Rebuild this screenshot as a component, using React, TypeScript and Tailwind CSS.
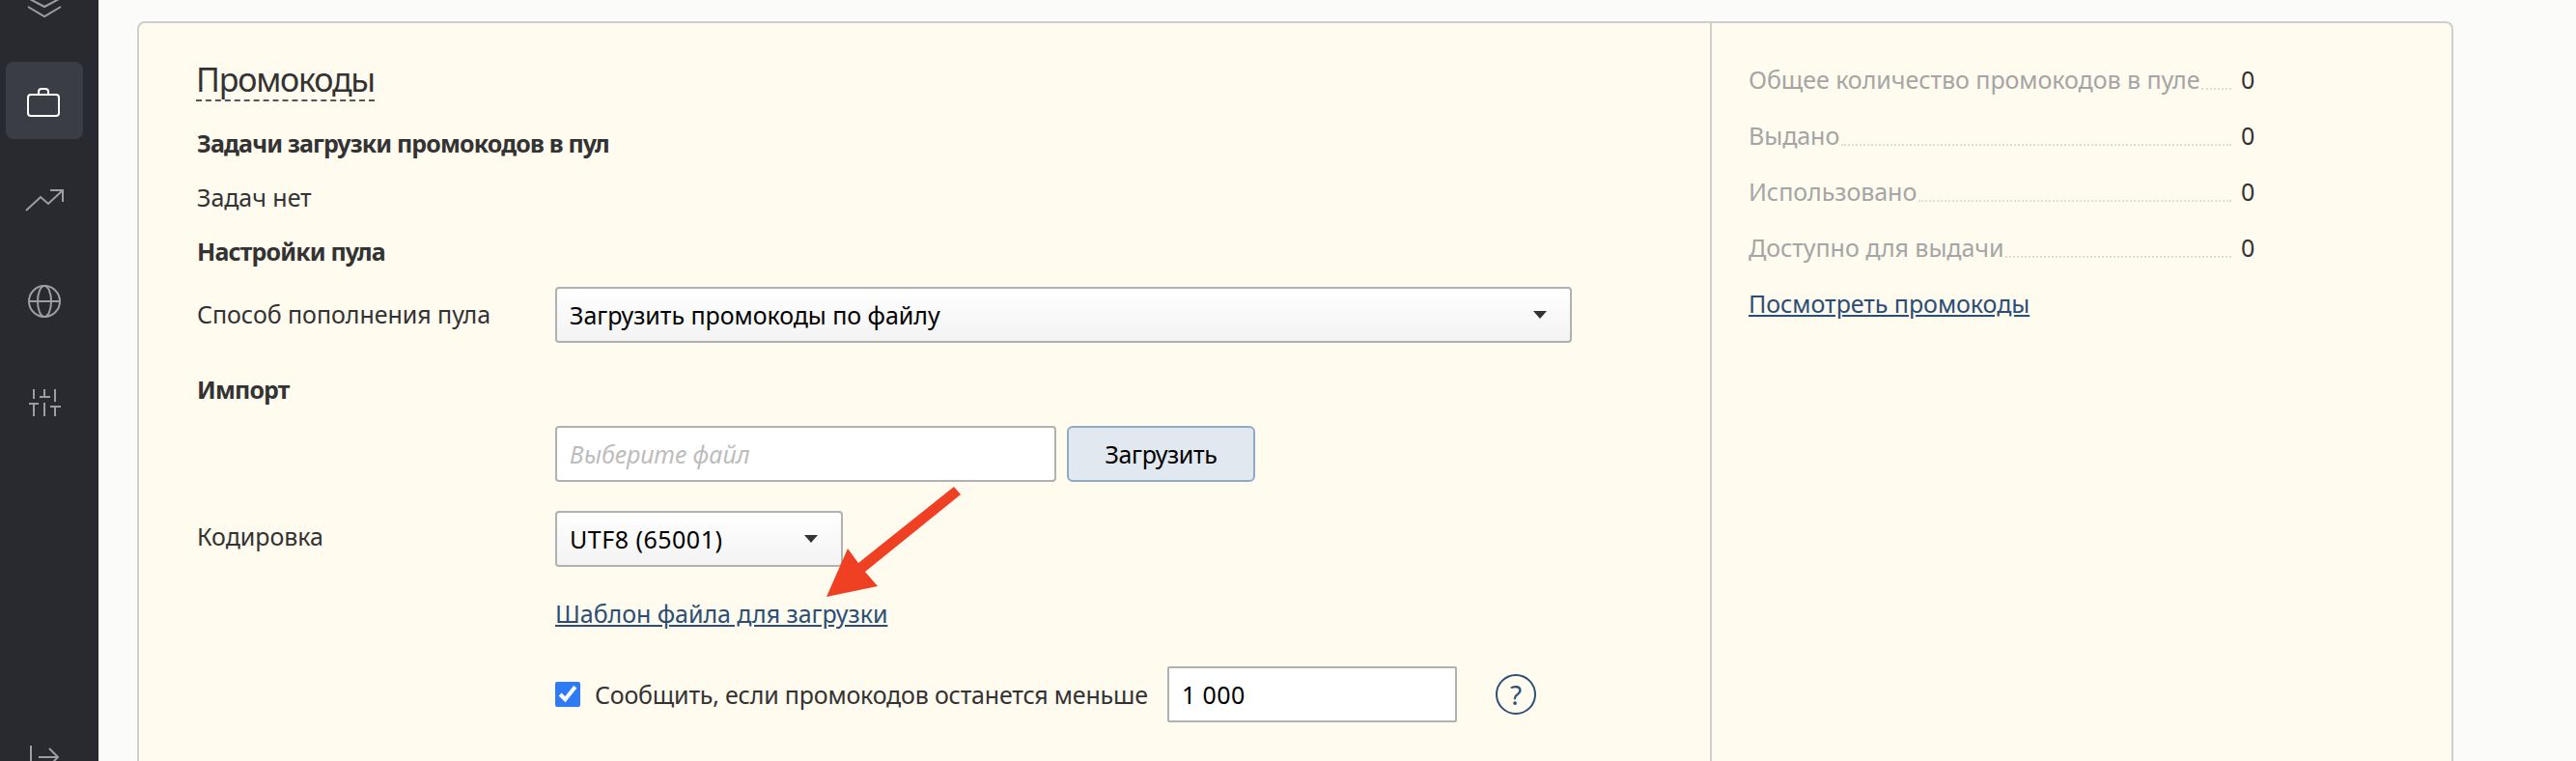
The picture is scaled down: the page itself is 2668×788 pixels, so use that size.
import React from 'react';

const font = "[font-family:'Noto_Sans',sans-serif]";

const SideIcon = ({ children, active }: { children: React.ReactNode; active?: boolean }) => (
  <div className={`flex h-[80px] w-[80px] items-center justify-center rounded-[8px] ${active ? 'bg-[#3a3d43]' : ''}`}>
    <svg width="48" height="48" viewBox="0 0 48 48" fill="none" stroke={active ? '#ffffff' : '#9d9ea2'} strokeWidth="2">
      {children}
    </svg>
  </div>
);

const Sidebar = () => (
  <aside className="flex h-full w-[102px] shrink-0 flex-col items-start gap-6 bg-[#282a2f] pl-[6px]">
    <div className="-mt-[40px]">
      <SideIcon>
        <path d="M7 31l17 10 17-10M7 22l17 9 17-9" />
      </SideIcon>
    </div>
    <SideIcon active>
      <rect x="7" y="18" width="32" height="22" rx="3" />
      <path d="M18 18v-3a3 3 0 0 1 3-3h4a3 3 0 0 1 3 3v3" />
    </SideIcon>
    <SideIcon>
      <path d="M5 34l15-14 8 7 15-14M30 13h13v12" />
    </SideIcon>
    <SideIcon>
      <circle cx="24" cy="24" r="16" />
      <ellipse cx="24" cy="24" rx="7" ry="16" />
      <path d="M8 24h32" />
    </SideIcon>
    <SideIcon>
      <path d="M13 11v10M13 26v13M8 26h10M24 11v8M19 19h11M24 25v14M35 11v13M30 29h11M35 29v10" />
    </SideIcon>
    <div className="mt-auto -mb-[16px]">
      <svg className="ml-[20px]" width="40" height="40" viewBox="0 0 40 40" fill="none" stroke="#9d9ea2" strokeWidth="2">
        <path d="M6 8v24M14 20h20M25 11l9 9-9 9" />
      </svg>
    </div>
  </aside>
);

const SelectBox = ({ value, className }: { value: string; className: string }) => (
  <div className={`flex h-[58px] items-center justify-between rounded-[4px] border-2 border-[#b1b1b1] bg-gradient-to-b from-white to-[#f3f3f3] pl-[13px] pr-[24px] text-black ${className}`}>
    <span>{value}</span>
    <span className="h-0 w-0 border-x-[7px] border-t-[8px] border-x-transparent border-t-[#333333]" />
  </div>
);

const stats = ['Общее количество промокодов в пуле', 'Выдано', 'Использовано', 'Доступно для выдачи'];

const App = () => (
  <div className={`flex h-[788px] w-[2668px] overflow-hidden bg-[#fbfcf9] text-[25px] leading-[34px] tracking-[-0.05px] text-[#333333] ${font}`}>
    <Sidebar />
    <main className="flex-1 pl-[40px] pt-[22px]">
      <div className="relative flex h-[800px] w-[2399px] rounded-[8px] border-2 border-b-0 border-[#cfcfcf] bg-[#fffbef]">
        <section className="w-[1629px] shrink-0 border-r-2 border-[#cfcfcf] pl-[60px] pt-[37px]">
          <h1 className="-ml-[1px] inline-block border-b-2 border-dashed border-[#555555] text-[34px] leading-[42px] font-normal tracking-[-1.2px]">Промокоды</h1>
          <h2 className="mt-[26px] font-bold tracking-[-0.85px]">Задачи загрузки промокодов в пул</h2>
          <p className="mt-[22px]">Задач нет</p>
          <h2 className="mt-[22px] font-bold tracking-[-0.85px]">Настройки пула</h2>
          <div className="mt-[20px] flex items-center">
            <span className="w-[371px] pb-[2px]">Способ пополнения пула</span>
            <SelectBox value="Загрузить промокоды по файлу" className="w-[1053px]" />
          </div>
          <h2 className="mt-[31px] font-bold tracking-[-0.85px]">Импорт</h2>
          <div className="ml-[371px] mt-[21px] flex gap-[11px]">
            <input
              readOnly
              placeholder="Выберите файл"
              className="h-[58px] w-[519px] rounded-[4px] border-2 border-[#b1b1b1] bg-white px-[13px] italic outline-none placeholder:text-[#bdbdbd]"
            />
            <button className="h-[58px] w-[195px] rounded-[6px] border-2 border-[#8fabc4] bg-[#e1e8ef] tracking-[-0.4px] text-black">Загрузить</button>
          </div>
          <div className="mt-[30px] flex items-center">
            <span className="w-[371px] pb-[6px]">Кодировка</span>
            <SelectBox value="UTF8 (65001)" className="w-[298px] tracking-[0.5px]" />
          </div>
          <a className="ml-[371px] mt-[31px] block w-fit text-[#2b4e77] underline underline-offset-2">Шаблон файла для загрузки</a>
          <div className="ml-[371px] mt-[38px] flex items-center">
            <input type="checkbox" checked readOnly className="h-[26px] w-[26px] accent-[#2f7bf6]" />
            <span className="ml-[15px] w-[593px] shrink-0 tracking-[-0.2px]">Сообщить, если промокодов останется меньше</span>
            <input
              readOnly
              value="1 000"
              className="h-[58px] w-[300px] rounded-[2px] border-2 border-[#b1b1b1] bg-white px-[13px] tracking-[0.4px] text-black outline-none"
            />
            <span className="ml-[40px] flex h-[42px] w-[42px] items-center justify-center rounded-full border-2 border-[#2b4e77] text-[28px] text-[#2b4e77]">?</span>
          </div>
        </section>
        <section className="flex-1 pl-[38px] pt-[41px]">
          <div className="flex w-[524px] flex-col gap-[24px]">
            {stats.map((label) => (
              <div key={label} className="flex items-end">
                <span className="text-[#a5a5a5]">{label}</span>
                <span className="mb-[6px] ml-[2px] flex-1 border-b-2 border-dotted border-[#dcdcd6]" />
                <span className="ml-[10px] w-[14px]">0</span>
              </div>
            ))}
          </div>
          <a className="mt-[24px] block w-fit text-[#2b4e77] underline underline-offset-2">Посмотреть промокоды</a>
        </section>
        <svg className="absolute left-[706px] top-[476px]" width="150" height="125" viewBox="0 0 150 125" fill="#f04023">
          <path d="M138 4L145 12L46 92L59 107L6 118L28 68L39 83Z" />
        </svg>
      </div>
    </main>
  </div>
);

export default App;
